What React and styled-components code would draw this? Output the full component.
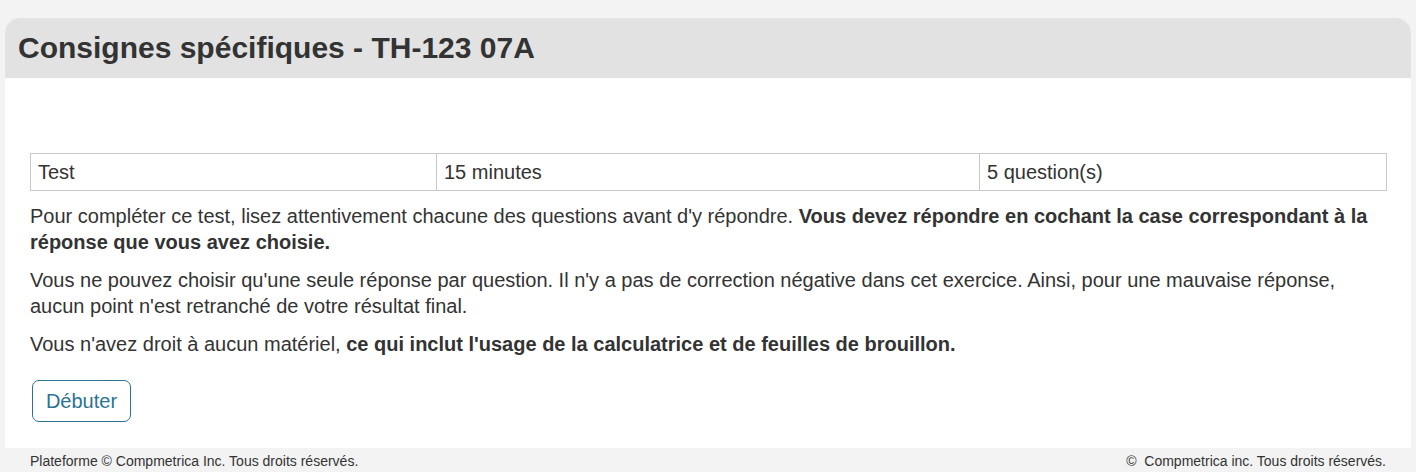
import React from 'react'
import styled, { createGlobalStyle } from 'styled-components'

const GlobalStyle = createGlobalStyle`
  html, body {
    margin: 0;
    padding: 0;
    background: #f2f3f2;
    font-family: "Liberation Sans", Arial, sans-serif;
    color: #333;
  }
`

function App() {
  return (
    <>
      <GlobalStyle />
      <Page>
        <Card>
          <Header>
            <Title>Consignes spécifiques - TH-123 07A</Title>
          </Header>
          <Body>
            <InfoTable>
              <colgroup>
                <col style={{ width: 406 }} />
                <col style={{ width: 543 }} />
                <col />
              </colgroup>
              <tbody>
                <tr>
                  <Cell>Test</Cell>
                  <Cell>15 minutes</Cell>
                  <Cell>5 question(s)</Cell>
                </tr>
              </tbody>
            </InfoTable>
            <Para>
              Pour compléter ce test, lisez attentivement chacune des questions avant d'y répondre.{' '}
              <strong>Vous devez répondre en cochant la case correspondant à la réponse que vous avez choisie.</strong>
            </Para>
            <Para>
              Vous ne pouvez choisir qu'une seule réponse par question. Il n'y a pas de correction négative dans cet exercice. Ainsi, pour une mauvaise réponse, aucun point n'est retranché de votre résultat final.
            </Para>
            <Para>
              Vous n'avez droit à aucun matériel,{' '}
              <strong>ce qui inclut l'usage de la calculatrice et de feuilles de brouillon.</strong>
            </Para>
            <StartButton>Débuter</StartButton>
          </Body>
        </Card>
        <Footer>
          <span>Plateforme © Compmetrica Inc. Tous droits réservés.</span>
          <span>©&nbsp; Compmetrica inc. Tous droits réservés.</span>
        </Footer>
      </Page>
    </>
  )
}

export default App

const Page = styled.div`
  padding-top: 18px;
  min-height: 472px;
  box-sizing: border-box;
`

const Card = styled.div`
  margin: 0 5px;
  background: #fff;
  border-radius: 15px 15px 0 0;
  overflow: hidden;
`

const Header = styled.div`
  background: #e1e2e1;
  height: 60px;
  display: flex;
  align-items: center;
  padding: 0 13px;
`

const Title = styled.h1`
  margin: 0;
  font-size: 30px;
  line-height: 34px;
  font-weight: bold;
  color: #333;
  padding-bottom: 1px;
`

const Body = styled.div`
  padding: 75px 24px 26px 25px;
`

const InfoTable = styled.table`
  width: 100%;
  table-layout: fixed;
  border-collapse: collapse;
  border: 1px solid #c8c8c8;
  margin-bottom: 12px;
`

const Cell = styled.td`
  border: 1px solid #c8c8c8;
  border-top: none;
  border-bottom: none;
  padding: 6px 7px;
  font-size: 20px;
  line-height: 24px;
  color: #333;
`

const Para = styled.p`
  margin: 0 0 12px;
  font-size: 20px;
  line-height: 26px;
  color: #333;
`

const StartButton = styled.button`
  margin-top: 23px;
  margin-left: 2px;
  height: 42px;
  width: 99px;
  background: #fff;
  border: 1px solid #2c7393;
  border-radius: 7px;
  color: #2c7393;
  font-family: "Liberation Sans", Arial, sans-serif;
  font-size: 20px;
  padding: 0;
  display: block;
`

const Footer = styled.div`
  display: flex;
  justify-content: space-between;
  padding: 4px 30px 0;
  font-size: 14px;
  line-height: 18px;
  color: #333;
`
